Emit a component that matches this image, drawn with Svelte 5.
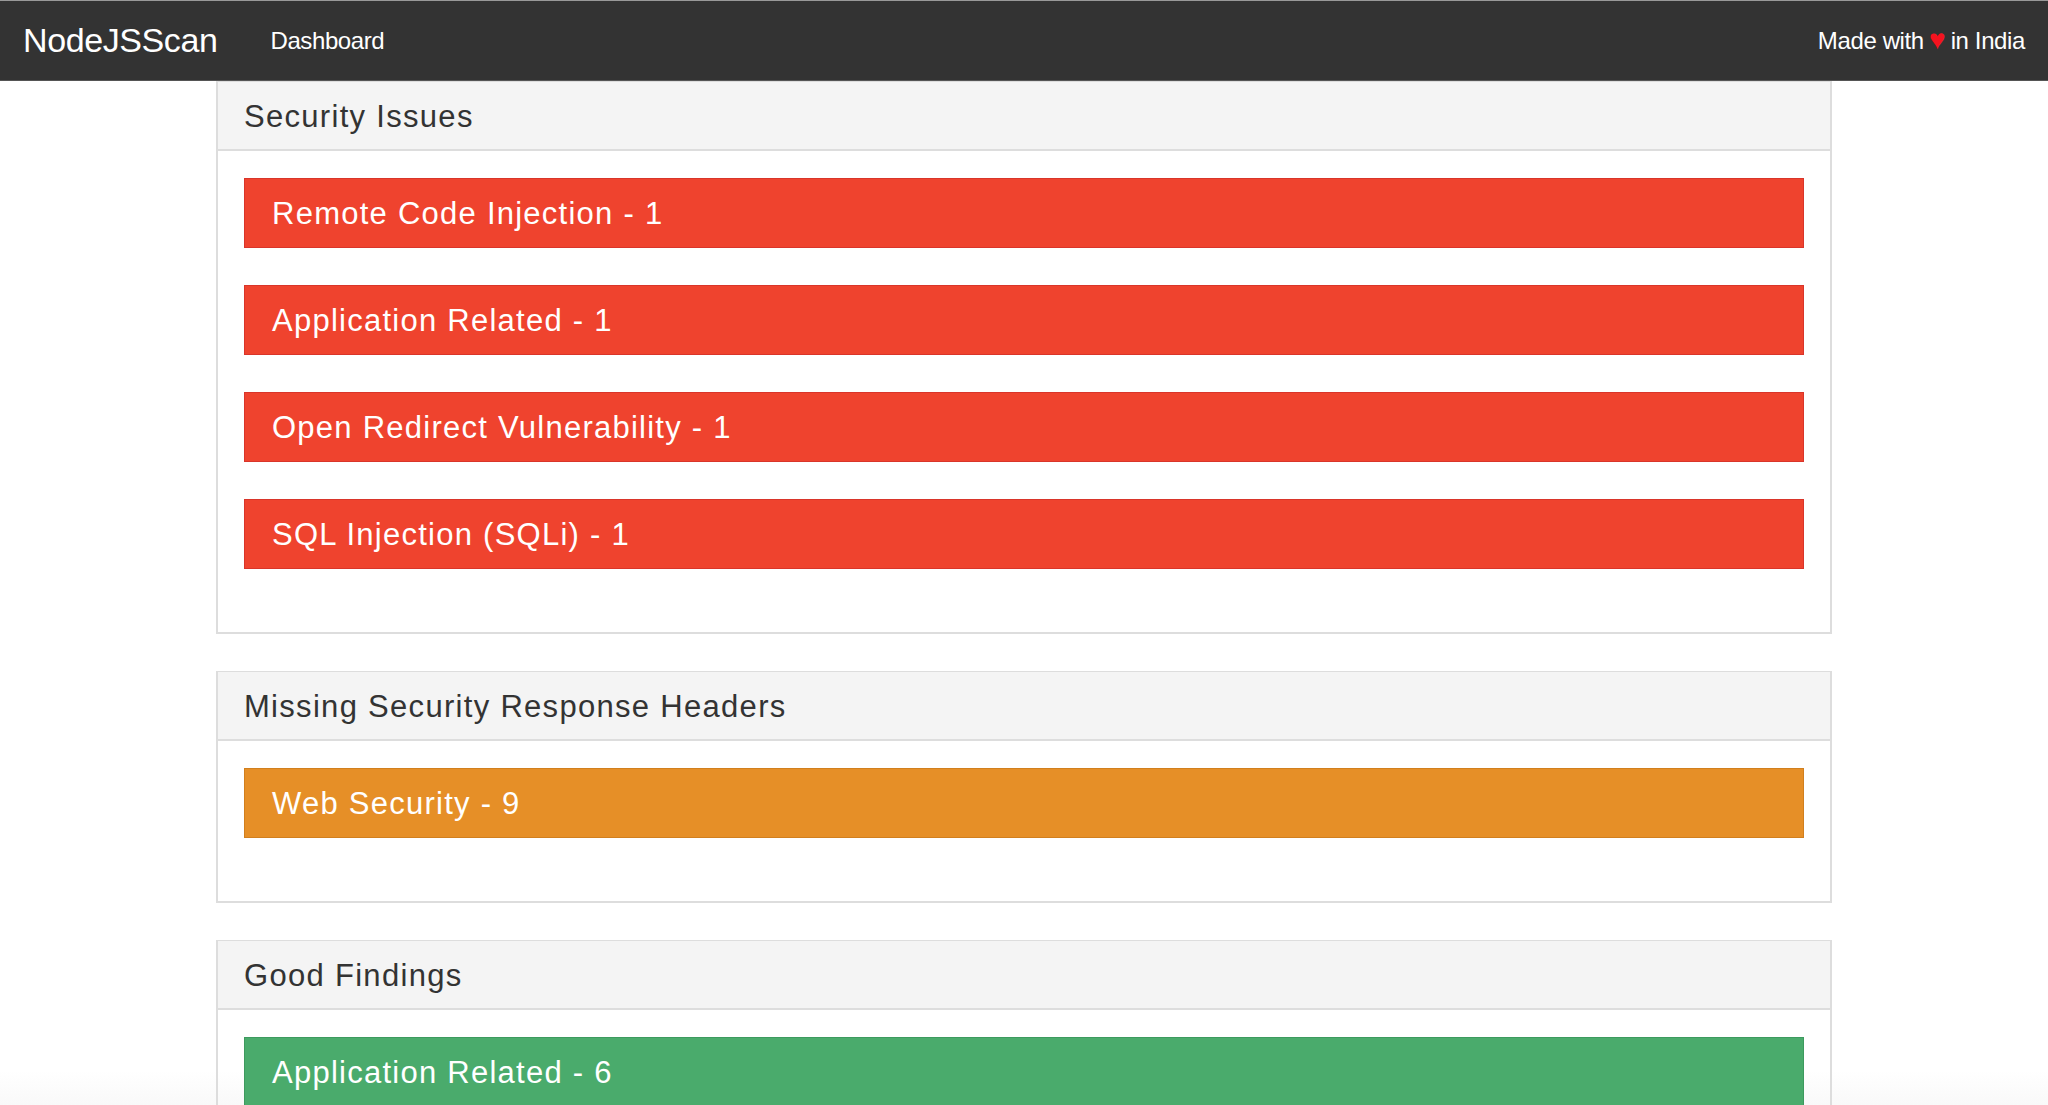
<script>
    const sections = [
        {
            title: "Security Issues",
            tone: "danger",
            items: [
                "Remote Code Injection - 1",
                "Application Related - 1",
                "Open Redirect Vulnerability - 1",
                "SQL Injection (SQLi) - 1"
            ]
        },
        { title: "Missing Security Response Headers", tone: "warning", items: ["Web Security - 9"] },
        { title: "Good Findings", tone: "success", items: ["Application Related - 6"] }
    ];
</script>

<nav class="navbar">
    <a class="brand" href="#top">NodeJSScan</a>
    <a class="nav-link" href="#top">Dashboard</a>
    <span class="made">Made with <span class="heart">♥</span> in India</span>
</nav>

<main class="container">
    {#each sections as section}
        <section class="panel">
            <h3 class="panel-heading">{section.title}</h3>
            <div class="panel-body">
                {#each section.items as item}
                    <div class="bar {section.tone}">{item}</div>
                {/each}
            </div>
        </section>
    {/each}
</main>

<style>
    :global(body) {
        margin: 0;
        height: 1105px;
        overflow: hidden;
        background: linear-gradient(#fff 1070px, #f9f9f9 1105px);
        font-family: "Liberation Sans", Arial, sans-serif;
    }

    .navbar {
        display: flex;
        align-items: center;
        background: #333;
        border-top: 1px solid #999;
        border-bottom: 1px solid #555;
        height: 79px;
        padding: 0 23px;
        color: #fff;
    }

    .brand {
        color: #fff;
        font-size: 34px;
        letter-spacing: -0.4px;
        text-decoration: none;
    }

    .nav-link {
        color: #fff;
        font-size: 24px;
        letter-spacing: -0.4px;
        text-decoration: none;
        margin-left: 53px;
    }

    .made {
        margin-left: auto;
        font-size: 24px;
        letter-spacing: -0.38px;
    }

    .heart {
        color: #f5131f;
        font-size: 28px;
        line-height: 24px;
        margin: 0 -1px;
    }

    .container {
        width: 1616px;
        margin: 0 auto;
    }

    .panel {
        border: 2px solid #ddd;
        border-top-width: 1px;
        margin-bottom: 37px;
    }

    .panel-heading {
        margin: 0;
        height: 67px;
        line-height: 69px;
        padding: 0 26px;
        background: #f4f4f4;
        border-bottom: 2px solid #ddd;
        color: #333;
        font-size: 31px;
        font-weight: 400;
        letter-spacing: 1.3px;
    }

    .panel-body {
        padding: 27px 26px 63px;
        display: flex;
        flex-direction: column;
        gap: 37px;
    }

    .bar {
        height: 68px;
        line-height: 69px;
        padding: 0 27px;
        color: #fff;
        font-size: 31px;
        letter-spacing: 1.25px;
        border: 1px solid transparent;
    }

    .danger {
        background: #ef432e;
        border-color: #d9352a;
    }

    .warning {
        background: #e68f27;
        border-color: #d17f1e;
    }

    .success {
        background: #4aab6c;
        border-color: #3d9a5e;
    }
</style>
